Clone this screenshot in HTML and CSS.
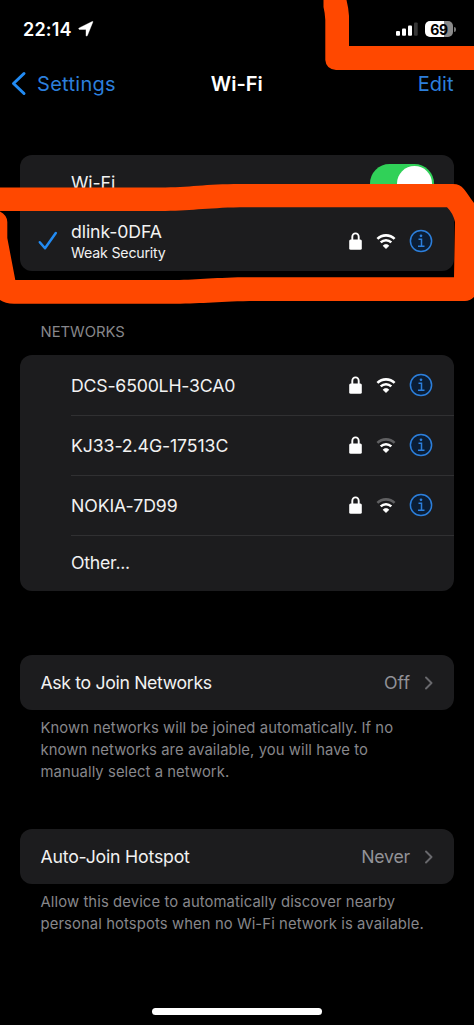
FILE: index.html
```
<!DOCTYPE html>
<html lang="en">
<head>
<meta charset="utf-8">
<title>Wi-Fi</title>
<link rel="stylesheet" href="styles.css">
</head>
<body>
<svg class="defs" width="0" height="0">
  <symbol id="lock" viewBox="0 0 13 18"><path d="M3.3 8.5V5a3.2 3.6 0 0 1 6.4 0v3.500" fill="none" stroke="#fff" stroke-width="1.900"/><rect x="0.200" y="7.500" width="12.600" height="10.300" rx="1.500" fill="#fff"/></symbol>
  <symbol id="wifi-arc" viewBox="0 0 20 16"><path d="M1.400 5.900a12.300 12.300 0 0 1 17.200 0" fill="none" stroke="currentColor" stroke-width="2.600"/></symbol>
  <symbol id="wifi-core" viewBox="0 0 20 16"><path d="M4.700 9.300a7.600 7.600 0 0 1 10.600 0" fill="none" stroke="#fff" stroke-width="2.500"/><path d="M10 15.700L6.900 12.700a4.500 4.500 0 0 1 6.200 0Z" fill="#fff" stroke="#fff" stroke-width=".4"/></symbol>
  <symbol id="info" viewBox="0 0 24 24"><circle cx="12" cy="12" r="10.600" fill="#0b1d34" stroke="#2c7fdc" stroke-width="1.500"/><circle cx="12" cy="6.800" r="1.350" fill="#2c7fdc"/><path d="M9.500 10.300h3v6.900M9 17.300h6.500" fill="none" stroke="#2c7fdc" stroke-width="1.500"/></symbol>
  <symbol id="chevron" viewBox="0 0 8 14"><path d="M1 1.500L6.500 7L1 12.500" fill="none" stroke="#68686c" stroke-width="1.900" stroke-linecap="round" stroke-linejoin="round"/></symbol>
</svg>
<div class="screen">
  <header class="status">
    <div class="clock"><span class="time">22:14</span>
      <svg class="location" viewBox="0 0 16 16"><path d="M14.900 .9L9.300 14.700Q8.600 15.700 8 14.500V8.400H1.200Q0 7.700 1.100 7L14.100 .6Q15.200 .1 14.900 .9Z" fill="#fff" stroke="#fff" stroke-width=".4"/></svg>
    </div>
    <div class="indicators">
      <svg class="signal" viewBox="0 0 22 14"><rect x="0" y="9" width="4" height="4.800" rx="1" fill="#fff"/><rect x="6" y="6.500" width="4" height="7.300" rx="1" fill="#fff"/><rect x="12" y="3.500" width="4" height="10.300" rx="1" fill="#fff"/><rect x="18" y="0.500" width="3.700" height="13.300" rx="1" fill="#363636"/></svg>
      <div class="battery"><span>69</span></div><i class="battery-tip"></i>
    </div>
  </header>
  <nav class="nav">
    <a class="back"><svg viewBox="0 0 16 26"><path d="M13 2.500L2.500 12.500L13 22.500" fill="none" stroke="#228bf3" stroke-width="3" stroke-linecap="round" stroke-linejoin="round"/></svg><span class="back-label">Settings</span></a>
    <h1>Wi-Fi</h1>
    <a class="edit">Edit</a>
  </nav>
  <main>
    <section class="card current">
      <div class="row short indented"><span class="label wifi">Wi-Fi</span><span class="toggle"><i></i></span></div>
      <div class="row connected">
        <svg class="check" viewBox="0 0 20 20"><path d="M1.800 11.200L7 17.200L17.800 2" fill="none" stroke="#228bf3" stroke-width="2.500" stroke-linecap="round" stroke-linejoin="round"/></svg>
        <div class="network"><span class="label dlink">dlink-0DFA</span><span class="sub">Weak Security</span></div>
        <div class="icons"><svg class="lock"><use href="#lock"/></svg><svg class="wifi-icon"><use href="#wifi-arc"/><use href="#wifi-core"/></svg><svg class="info"><use href="#info"/></svg></div>
      </div>
    </section>
    <h2>NETWORKS</h2>
    <section class="card networks">
      <div class="row indented line"><span class="label dcs">DCS-6500LH-3CA0</span><div class="icons"><svg class="lock"><use href="#lock"/></svg><svg class="wifi-icon"><use href="#wifi-arc"/><use href="#wifi-core"/></svg><svg class="info"><use href="#info"/></svg></div></div>
      <div class="row indented line"><span class="label kj">KJ33-2.4G-17513C</span><div class="icons"><svg class="lock"><use href="#lock"/></svg><svg class="wifi-icon"><use class="weak" href="#wifi-arc"/><use href="#wifi-core"/></svg><svg class="info"><use href="#info"/></svg></div></div>
      <div class="row indented line"><span class="label nokia">NOKIA-7D99</span><div class="icons"><svg class="lock"><use href="#lock"/></svg><svg class="wifi-icon"><use class="weak" href="#wifi-arc"/><use href="#wifi-core"/></svg><svg class="info"><use href="#info"/></svg></div></div>
      <div class="row short indented"><span class="label other">Other...</span></div>
    </section>
    <section class="card option"><div class="row short"><span class="label ask">Ask to Join Networks</span><span class="value">Off</span><svg class="chevron"><use href="#chevron"/></svg></div></section>
    <p class="note">Known networks will be joined automatically. If no<br>known networks are available, you will have to<br>manually select a network.</p>
    <section class="card option"><div class="row short"><span class="label auto">Auto-Join Hotspot</span><span class="value never">Never</span><svg class="chevron"><use href="#chevron"/></svg></div></section>
    <p class="note wide">Allow this device to automatically discover nearby<br>personal hotspots when no Wi-Fi network is available.</p>
  </main>
  <div class="home"></div>
  <svg class="marker" viewBox="0 0 474 1025">
    <path d="M323.500 0H346.500Q348.500 8 349 16V46H474V70H336Q326 69 325.300 60V20Q325 13 323.500 7Z"/>
    <path fill-rule="evenodd" d="M0 187.500H160C190 187.500 205 184 240 184H453C463 184 465 191 474 203V297Q470 301 465 301H260C220 301 205 303.700 175 303.700H14Q5 303.700 0 300Z M0 211.500Q7 215 7.300 222V238L15.300 280H175C200 280 215 277.300 250 277.300H454L455 222Q453 213 447 207.300H240C205 208 190 211 160 211H0Z"/>
  </svg>
</div>
</body>
</html>
```
FILE: styles.css
```
* { box-sizing: border-box; }
body { margin: 0; background: #000; color: #f2f2f2; font-family: Inter, "Liberation Sans", sans-serif; }
.defs { position: absolute; }
.screen { position: relative; width: 474px; height: 1025px; overflow: hidden; display: flex; flex-direction: column; background: #000; }
.status { height: 58px; padding: 0 19px 0 23px; display: flex; justify-content: space-between; align-items: center; color: #fff; }
.clock { display: flex; align-items: center; gap: 6px; }
.time { font-size: 18px; font-weight: 600; letter-spacing: .2px; }
.location { width: 16px; height: 16px; }
.indicators { display: flex; align-items: center; }
.signal { width: 22px; height: 14px; margin-right: 7px; }
.battery { width: 28px; height: 16px; border-radius: 5px; background: linear-gradient(90deg, #fff 69%, #8b8b8b 69%); color: #000; display: flex; align-items: center; justify-content: center; font-size: 14px; font-weight: 700; letter-spacing: -.3px; }
.battery-tip { width: 2px; height: 5px; margin-left: 1px; margin-right: -1px; background: #777; border-radius: 0 2px 2px 0; }
.nav { height: 52px; padding: 0 20.500px 0 11px; display: grid; grid-template-columns: 1fr auto 1fr; align-items: center; font-size: 20px; }
.back { display: flex; align-items: center; color: #2c7fdc; gap: 10px; }
.back svg { width: 16px; height: 26px; }
.back-label { letter-spacing: .3px; }
h1 { margin: 0 -9px 0 0; font-size: 20px; font-weight: 600; color: #fff; }
.edit { justify-self: end; color: #2c7fdc; }
main { padding: 45px 20px 0; }
.card { background: #1c1c1e; border-radius: 12px; }
.row { height: 60px; display: flex; align-items: center; padding: 0 20.500px; position: relative; }
.row.short { height: 55px; }
.row.indented { padding-left: 51px; }
.line::after { content: ""; position: absolute; left: 51px; right: 0; bottom: -1px; height: 1px; background: #303032; }
.label { font-size: 17.700px; line-height: 22px; padding-top: 1px; white-space: nowrap; }
.wifi, .nokia, .kj, .dlink { letter-spacing: -.1px; }
.dcs, .auto { letter-spacing: -.2px; }
.other { letter-spacing: -.250px; }
.ask { letter-spacing: -.350px; }
.row.connected { height: 61px; padding-left: 17.500px; }
.check { width: 20px; height: 20px; margin-right: 13.500px; }
.network { display: flex; flex-direction: column; padding-top: 2px; }
.sub { font-size: 14.200px; line-height: 20px; letter-spacing: -.200px; }
.toggle { width: 64px; height: 39px; margin-left: auto; border-radius: 20px; background: #30d158; padding: 2px; display: flex; justify-content: flex-end; align-self: flex-start; margin-top: 8.500px; }
.toggle i { width: 35px; height: 35px; border-radius: 50%; background: #fff; }
.icons { margin-left: auto; margin-right: 1px; display: flex; align-items: center; }
.lock { width: 13px; height: 18px; margin-right: 14px; }
.wifi-icon { width: 20px; height: 16px; margin-right: 12.500px; color: #fff; }
.weak { color: #606062; }
.info { width: 24px; height: 24px; }
h2 { margin: 51px 20.500px 13px; height: 20px; font-size: 14.800px; line-height: 20px; font-weight: 400; color: #87878b; }
.networks .short { height: 56px; }
.networks .short .label { padding-top: 0; }
.option { margin-top: 64px; }
.value { margin-left: auto; font-size: 17.700px; color: #929297; }
.never { letter-spacing: -.2px; }
.chevron { width: 8px; height: 14px; margin: 0 .500px 0 15px; }
.note { margin: 7px 20.500px 0; font-size: 14.800px; line-height: 22px; letter-spacing: .080px; color: #87878b; white-space: nowrap; }
.note.wide { letter-spacing: .110px; }
.note + .option { margin-top: 46px; }
.home { position: absolute; left: 152px; top: 1008px; width: 170px; height: 7px; border-radius: 4px; background: #fff; }
.marker { position: absolute; inset: 0; width: 474px; height: 1025px; fill: #ff4800; }
```
